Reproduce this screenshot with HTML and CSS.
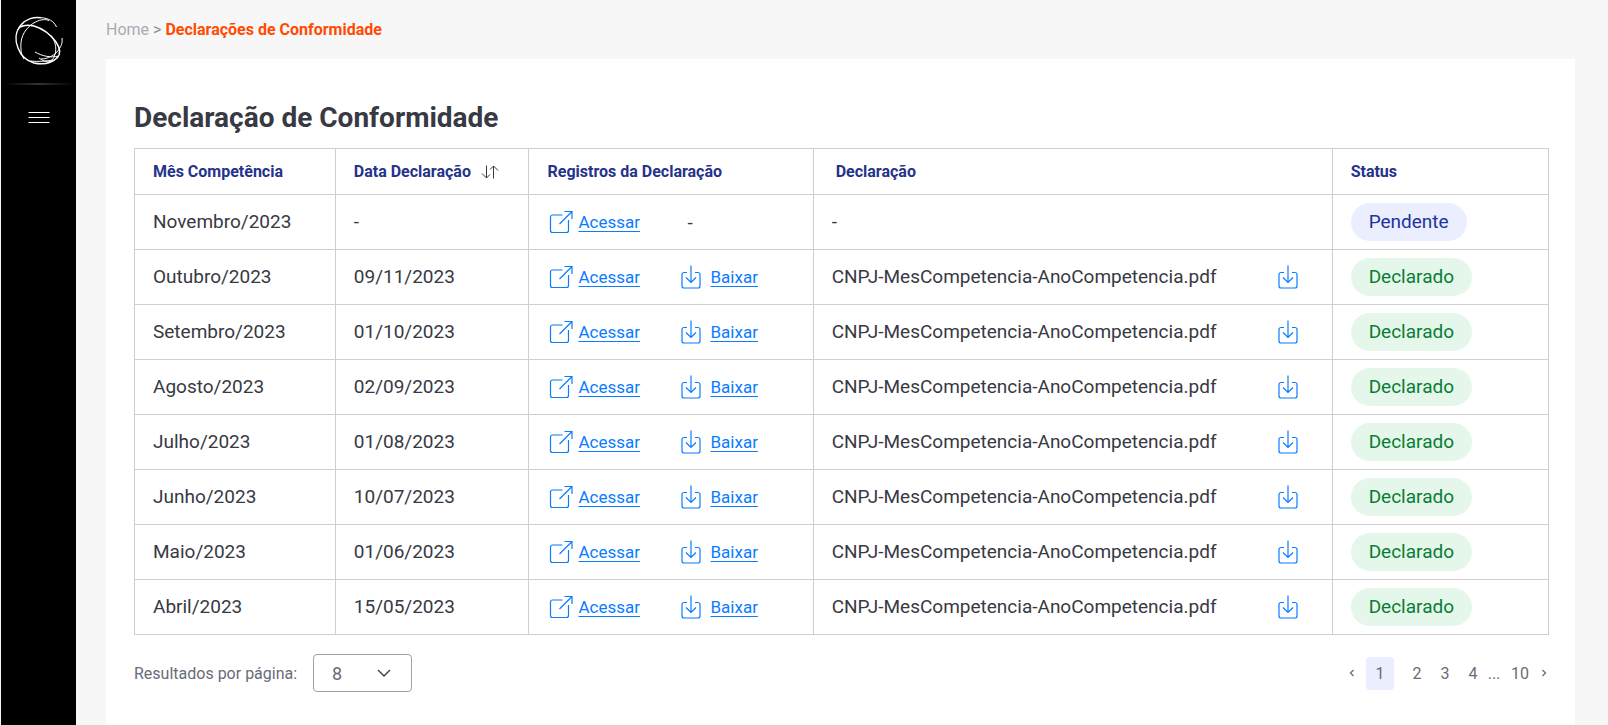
FILE: index.html
```html
<!DOCTYPE html>
<html lang="pt-BR">
<head>
<meta charset="utf-8">
<title>Declarações de Conformidade</title>
<link rel="stylesheet" href="styles.css">
</head>
<body>
<svg class="sprite" aria-hidden="true">
  <symbol id="open" viewBox="0 0 24 24">
    <path d="M13.500 5H3.500A2 2 0 0 0 1.500 7v13.500a2 2 0 0 0 2 2H17.500a2 2 0 0 0 2-2V10M10.500 14L22.500 2M15.500 1.500h7.500v7.500"/>
  </symbol>
  <symbol id="download" viewBox="0 0 24 24">
    <path d="M8 7.500H5A2 2 0 0 0 3 9.500v11.500A2 2 0 0 0 5 23h14a2 2 0 0 0 2-2V9.500A2 2 0 0 0 19 7.500h-3M12 .5v17M7 12.500l5 5 5-5"/>
  </symbol>
</svg>
<div class="app">
  <aside class="sidebar">
    <svg class="logo" viewBox="0 0 48 48" role="img" aria-label="Logo">
      <path d="M41.500 10C39 4 33 1 26 .7"/>
      <path class="thick" d="M26 .7C19-.5 11 2 6 8 0 15 0 24 3 31c3 8 9 13 16 15 9 2 18 0 24-6"/>
      <path class="thick" d="M5 10c4-2 9-2 14-1 10 3 17 9 22 16 4 6 5 12 1 16"/>
      <path d="M34 3.500C28 1 21 4 16 8 8 14 5 23 6 32c0 4 1 7 3 10"/>
      <path d="M47 21c1 6-2 11-7 16-4 3-9 5-14 5"/>
      <path d="M36 18.500c4 5 6 12 4 19-1 4-4 7-7 8.500"/>
      <path d="M20 35c7 4 15 6 24 4M24 41c4 3 7 4 12 4M15 44c8 1 17 0 23-1"/>
    </svg>
    <div class="divider"></div>
    <button class="menu" aria-label="Abrir menu">
      <svg viewBox="0 0 22 14"><path d="M.5 1.500h21M.5 6.500h21M.5 11.500h21"/></svg>
    </button>
  </aside>
  <div class="page">
    <nav class="breadcrumb" aria-label="Navegação"><a href="#">Home</a> &gt; <strong>Declarações de Conformidade</strong></nav>
    <main class="card">
      <h1>Declaração de Conformidade</h1>
      <table>
        <colgroup><col class="c-month"><col class="c-date"><col class="c-records"><col class="c-file"><col class="c-status"></colgroup>
        <thead>
          <tr>
            <th>Mês Competência</th>
            <th><button class="sort">Data Declaração <svg viewBox="0 0 18 14"><path d="M5.500 .5v12.500M1 8.500l4.500 4.500 3.500-3.500M12.500 13.500V1M9 4.500L12.500 1 17 5.500"/></svg></button></th>
            <th>Registros da Declaração</th>
            <th class="indent">Declaração</th>
            <th>Status</th>
          </tr>
        </thead>
        <tbody id="rows"></tbody>
      </table>
      <footer class="footer">
        <div class="per-page">
          <label for="size">Resultados por página:</label>
          <span class="select">
            <select id="size"><option>8</option><option>16</option></select>
            <svg viewBox="0 0 14 8"><path d="M1 1l6 6 6-6"/></svg>
          </span>
        </div>
        <nav class="pager" aria-label="Paginação">
          <button class="arrow" aria-label="Anterior"><svg viewBox="0 0 6 8"><path d="M4.500 1l-3 3 3 3"/></svg></button>
          <button class="num current">1</button>
          <button class="num">2</button>
          <button class="num">3</button>
          <button class="num">4</button>
          <span class="dots">...</span>
          <button class="num last">10</button>
          <button class="arrow" aria-label="Próxima"><svg viewBox="0 0 6 8"><path d="M1.500 1l3 3-3 3"/></svg></button>
        </nav>
      </footer>
    </main>
  </div>
</div>
<script src="rows.js"></script>
</body>
</html>
```
FILE: styles.css
```css
* { box-sizing: border-box; }
body { margin: 0; background: #f7f7f7; color: #373943; font-family: Roboto, "Liberation Sans", sans-serif; font-size: 19px; }
button { border: 0; padding: 0; background: none; color: inherit; font: inherit; cursor: pointer; }
svg { fill: none; stroke: currentColor; }
.sprite { display: none; }
.app { display: flex; min-height: 100vh; padding-left: 1px; }
.sidebar { flex: none; display: flex; flex-direction: column; align-items: center; width: 75px; padding-top: 17px; background: #000; color: #fff; }
.logo { width: 48px; height: 48px; overflow: visible; stroke-width: 1; }
.thick { stroke-width: 1.5; }
.divider { width: 70px; height: 2px; margin: 18px 0 26px; background: linear-gradient(90deg, #000, #333 50%, #000); }
.menu { display: flex; }
.menu svg { width: 22px; height: 14px; stroke-width: 1; }
.page { flex: 1; display: flex; flex-direction: column; min-width: 0; padding: 0 33px 0 30px; }
.breadcrumb { padding: 20px 0 19px; color: #8f8f99; font-size: 16px; line-height: 20px; }
.breadcrumb a { color: #aaaab2; text-decoration: none; }
.breadcrumb strong { color: #ff4b00; font-weight: 700; }
.card { flex: 1; padding: 43px 26px 32px 28px; background: #fff; }
h1 { margin: 0 0 14px; font-size: 28px; line-height: 32px; font-weight: 700; }
table { width: 100%; border-collapse: collapse; table-layout: fixed; }
th, td { padding: 0 18px; border: 1px solid #cfcfcf; text-align: left; white-space: nowrap; }
th { height: 46px; color: #25338a; font-size: 16px; font-weight: 700; }
td { height: 55px; }
td:nth-child(-n+2) { padding-bottom: 2px; }
.indent { padding-left: 22px; }
.c-month { width: 14.2%; }
.c-date { width: 13.7%; }
.c-records { width: 20.1%; }
.c-file { width: 36.7%; }
.sort { display: flex; align-items: center; gap: 10px; }
.sort svg { width: 18px; height: 14px; color: #373943; }
.records { display: grid; grid-template-columns: 130px 1fr; align-items: center; padding-left: 2px; }
.action { display: inline-flex; align-items: center; gap: 5px; color: #0a7cff; font-size: 17px; text-underline-offset: 3px; text-decoration-thickness: 1px; }
.action svg, .get svg { width: 24px; height: 24px; stroke-width: 1.2; }
.action + .action { gap: 7px; }
.none { padding-left: 8px; }
.file { display: flex; align-items: center; justify-content: space-between; padding-right: 14px; }
.file span { padding-bottom: 2px; }
.get { display: flex; color: #0a7cff; }
.badge { display: inline-block; padding: 0 18px; border-radius: 19px; line-height: 38px; vertical-align: middle; }
.done { background: #e4f7ea; color: #0a7d35; }
.pending { background: #ebeefe; color: #2233a0; }
.footer { display: flex; justify-content: space-between; align-items: center; padding-top: 19px; color: #696b78; font-size: 16px; }
.per-page { display: flex; align-items: center; gap: 16px; }
.select { position: relative; display: flex; }
.select select { width: 99px; height: 38px; padding: 0 18px; border: 1px solid #a1a1aa; border-radius: 4px; background: #fff; color: inherit; font: inherit; font-size: 18px; appearance: none; }
.select svg { position: absolute; right: 21px; top: 15px; width: 14px; height: 8px; color: #373943; stroke-width: 1.3; pointer-events: none; }
.pager { display: flex; align-items: center; }
.num { width: 28px; height: 33px; }
.current { margin: 0 9px; border-radius: 4px; background: #ebeefe; }
.dots { width: 14px; text-align: center; }
.last { width: 38px; }
.arrow { display: flex; justify-content: center; width: 10px; }
.arrow svg { width: 6px; height: 8px; stroke-width: 1.3; }
```
FILE: rows.js
```js
const rows = [
  ["Novembro/2023", null],
  ["Outubro/2023", "09/11/2023"],
  ["Setembro/2023", "01/10/2023"],
  ["Agosto/2023", "02/09/2023"],
  ["Julho/2023", "01/08/2023"],
  ["Junho/2023", "10/07/2023"],
  ["Maio/2023", "01/06/2023"],
  ["Abril/2023", "15/05/2023"],
];
const icon = (name) => `<svg aria-hidden="true"><use href="#${name}"/></svg>`;
document.getElementById("rows").innerHTML = rows.map(([month, date]) => `
  <tr>
    <td>${month}</td>
    <td>${date || "-"}</td>
    <td><div class="records">
      <a class="action" href="#">${icon("open")}<span>Acessar</span></a>
      ${date ? `<a class="action" href="#">${icon("download")}<span>Baixar</span></a>` : '<span class="none">-</span>'}
    </div></td>
    <td><div class="file">${date ? `<span>CNPJ-MesCompetencia-AnoCompetencia.pdf</span><button class="get" aria-label="Baixar declaração">${icon("download")}</button>` : "<span>-</span>"}</div></td>
    <td><span class="badge ${date ? "done" : "pending"}">${date ? "Declarado" : "Pendente"}</span></td>
  </tr>`).join("");
```
